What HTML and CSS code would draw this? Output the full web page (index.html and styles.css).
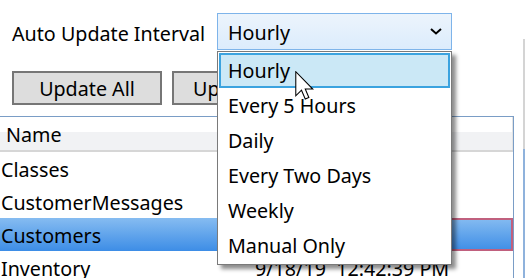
FILE: index.html
```html
<!DOCTYPE html>
<html>
<head>
<meta charset="utf-8">
<link rel="stylesheet" href="styles.css">
</head>
<body>
<div class="window">
  <div class="main">
    <div class="toprow">
      <span class="label">Auto Update Interval</span>
      <div class="combo">
        <span class="combo-text">Hourly</span>
        <svg class="chev" width="12" height="7" viewBox="0 0 12 7"><path d="M1 1 L6 5.5 L11 1" fill="none" stroke="#000" stroke-width="2"/></svg>
      </div>
    </div>
    <div class="btnrow">
      <button class="btn btn1">Update All</button>
      <button class="btn btn2"><span class="btn2-text">Update Selected</span></button>
    </div>
    <div class="list">
      <div class="lhead">
        <div class="hcell c1">Name</div>
        <div class="hcell c2">Last Updated</div>
      </div>
      <div class="row"><div class="cell c1">Classes</div><div class="cell c2">9/18/19&nbsp;&nbsp;12:42:39 PM</div></div>
      <div class="row"><div class="cell c1">CustomerMessages</div><div class="cell c2">9/18/19&nbsp;&nbsp;12:42:39 PM</div></div>
      <div class="row sel"><div class="cell c1">Customers</div><div class="cell c2 focus">9/18/19&nbsp;&nbsp;12:42:39 PM</div></div>
      <div class="row"><div class="cell c1">Inventory</div><div class="cell c2">9/18/19&nbsp;&nbsp;12:42:39 PM</div></div>
    </div>
  </div>
  <div class="side"></div>
</div>

<div class="popup">
  <div class="item hi">Hourly</div>
  <div class="item">Every 5 Hours</div>
  <div class="item">Daily</div>
  <div class="item">Every Two Days</div>
  <div class="item">Weekly</div>
  <div class="item">Manual Only</div>
</div>

<svg class="cursor" width="19" height="29" viewBox="0 0 12.6 19.3">
  <path d="M0.5 0.5 L0.5 16.5 L4.3 12.8 L6.8 18.6 L9.2 17.6 L6.8 12 L11.8 12 Z" fill="#fff" stroke="#000" stroke-width="0.7" stroke-linejoin="miter"/>
</svg>
</body>
</html>
```

FILE: styles.css
```css
html, body {
  margin: 0;
  padding: 0;
  background: #fff;
  overflow: hidden;
}
body {
  width: 525px;
  height: 278px;
  font-family: "Noto Sans", "Open Sans", sans-serif;
  font-size: 19.7px;
  color: #000;
  position: relative;
}
.window {
  display: flex;
  height: 278px;
}
.main {
  width: 515px;
  display: flex;
  flex-direction: column;
}
.side {
  margin-left: 8px;
  margin-top: 39px;
  width: 2px;
  background: linear-gradient(#d4d4d4 0, #d4d4d4 110px, #8fb2dc 110px);
}
.toprow {
  display: flex;
  align-items: center;
  padding: 13px 0 0 12px;
  height: 37px;
}
.label {
  width: 205px;
  height: 37px;
  line-height: 37px;
  padding-top: 2px;
  box-sizing: border-box;
}
.combo {
  box-sizing: border-box;
  width: 235px;
  height: 37px;
  border: 1px solid #7eb4ea;
  background: linear-gradient(#ecf4fc, #dcecfc);
  display: flex;
  align-items: center;
  justify-content: space-between;
  padding: 0 9px 0 10px;
}
.combo-text { padding-top: 2px; }
.btnrow {
  display: flex;
  gap: 10px;
  padding: 21px 0 0 12px;
  height: 34px;
}
.btn {
  box-sizing: border-box;
  height: 34px;
  border: 2px solid #767676;
  background: #dddddd;
  font: inherit;
  color: #000;
  padding: 1px 0 0;
  white-space: nowrap;
}
.btn1 { width: 150px; }
.btn2 {
  width: 200px;
  display: flex;
  align-items: center;
  justify-content: flex-start;
  padding: 1px 0 0 0;
}
.btn2-text { margin-left: 19px; }
.list {
  margin-top: 11px;
  border-top: 1px solid #7a9dc6;
  border-right: 1px solid #7a9dc6;
  flex: 1;
  width: 514px;
  box-sizing: border-box;
  overflow: hidden;
}
.lhead {
  display: flex;
  height: 35px;
  box-sizing: border-box;
  border-bottom: 2px solid #d6d6d6;
  background: linear-gradient(#ffffff 0, #ffffff 45%, #f1f2f4 45%, #f1f2f4 100%);
}
.hcell {
  line-height: 33px;
  padding-top: 1px;
  box-sizing: border-box;
}
.hcell.c1 { width: 245px; padding-left: 6px; }
.hcell.c2 { flex: 1; padding-left: 6px; border-right: 1px solid #e3e3e3; }
.row {
  display: flex;
  height: 33px;
  line-height: 33px;
}
.cell { padding-top: 1px; box-sizing: border-box; height: 33px; }
.cell.c1 { width: 250px; padding-left: 1px; white-space: nowrap; }
.cell.c2 { flex: 1; padding-left: 5px; white-space: nowrap; }
.row.sel {
  background: linear-gradient(#86bcf1, #3d8de6);
}
.cell.focus {
  border: 2px solid #c0607e;
  line-height: 29px;
  padding-top: 0;
}
.popup {
  position: absolute;
  left: 217px;
  top: 51px;
  width: 235px;
  box-sizing: border-box;
  border: 1px solid #7a7a7a;
  background: #fff;
  box-shadow: 4px 4px 4px rgba(0,0,0,0.45);
  padding: 1px;
}
.item {
  height: 35px;
  line-height: 35px;
  padding-left: 9px;
  box-sizing: border-box;
}
.item.hi {
  background: #cbe8f6;
  border: 2px solid #3ba3df;
  padding-left: 7px;
  line-height: 31px;
}
.cursor {
  position: absolute;
  left: 295px;
  top: 71px;
}
```
